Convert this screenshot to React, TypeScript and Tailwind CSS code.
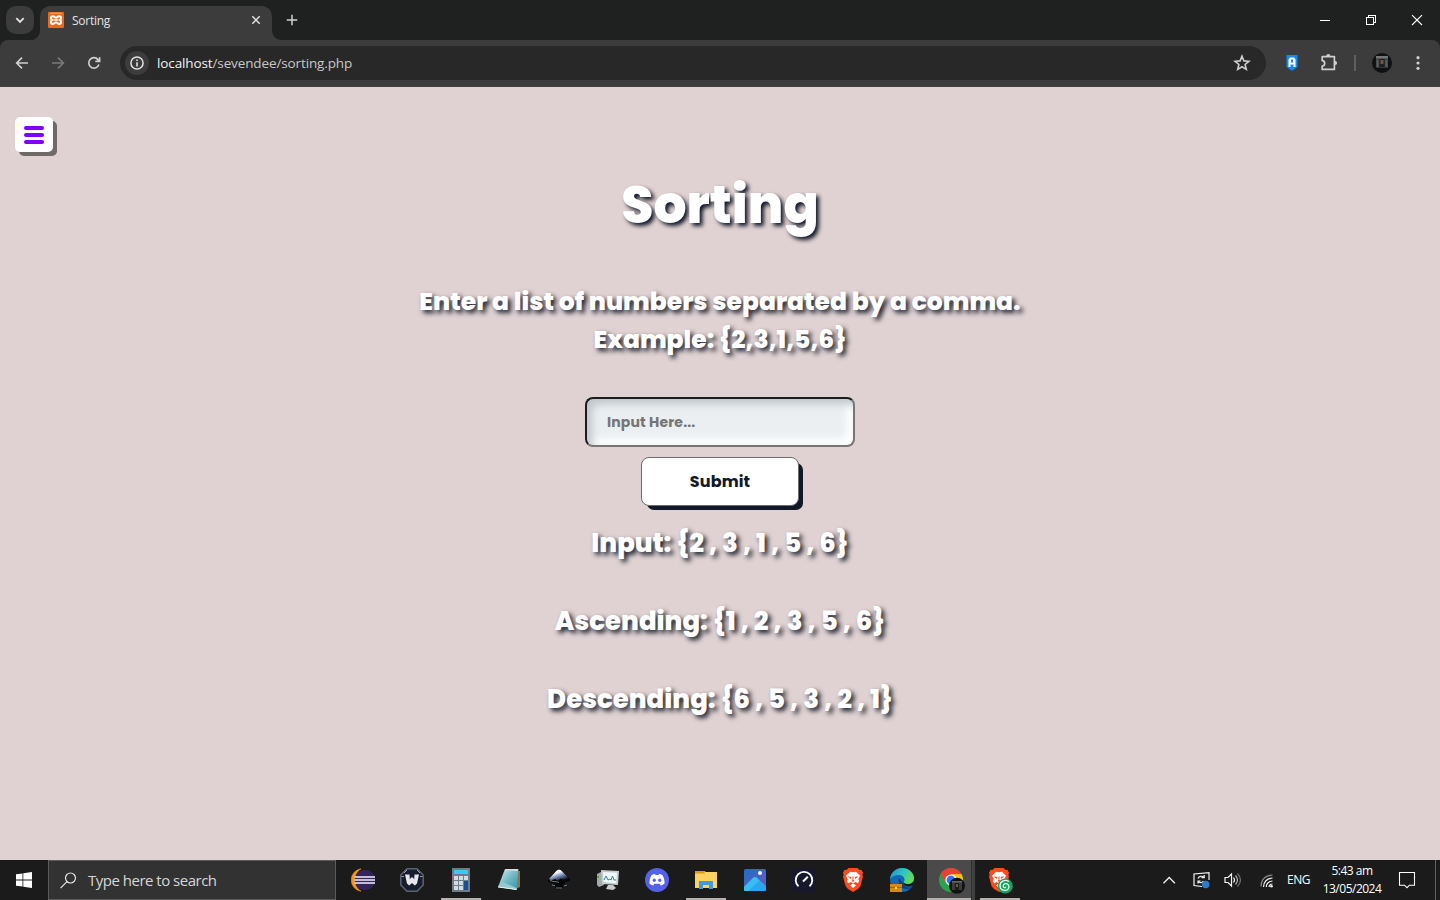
import type { ReactNode } from "react";

const SEGOE = "font-['Open_Sans','Noto_Sans',sans-serif]";

function TabStrip() {
  return (
    <div className="relative flex h-10 items-start bg-[#1f2120]">
      <div className="ml-1.5 mt-1.5 flex h-7 w-7 items-center justify-center rounded-[10px] bg-[#3c3c3c]">
        <svg width="28" height="28" viewBox="0 0 28 28" fill="none" stroke="#e3e3e3" strokeWidth="1.8">
          <path d="M10.3 12.2 14 15.9l3.7-3.7" />
        </svg>
      </div>
      <svg className="mt-[30px] shrink-0" width="6" height="10" viewBox="0 0 6 10">
        <path d="M6 0v10H-4C2 10 6 6 6 0Z" fill="#3c3c3c" />
      </svg>
      <div className="mt-1.5 flex h-[34px] w-[232px] items-start rounded-t-[10px] bg-[#3c3c3c] pl-2 pt-1.5">
        <svg width="16" height="16" viewBox="0 0 16 16">
          <rect width="16" height="16" rx="1" fill="#ea6a1a" />
          <path d="M2 1.2h12" stroke="#ffb27a" strokeWidth=".8" />
          <path
            d="M5 4.2C3.2 4.2 3 5 3 6c0 1.100.3 1.700 1 2-.7.3-1 .9-1 2 0 1 .5 1.900 2 1.900 1.600 0 1.500-1.500 3-1.500s1.400 1.500 3 1.500c1.500 0 2-.9 2-1.900 0-1.100-.3-1.700-1-2 .7-.3 1-.9 1-2 0-1-.2-1.800-2-1.800-1.600 0-1.500 1.500-3 1.500S6.600 4.200 5 4.200Z"
            fill="none"
            stroke="#fff"
            strokeWidth="2"
          />
          <path d="M6.200 8h3.600" stroke="#fff" strokeWidth="1.500" />
        </svg>
        <span className={`ml-2 text-[12px] leading-[17px] text-[#e3e3e3] tracking-[-0.25px] ${SEGOE}`}>Sorting</span>
        <svg className="ml-auto mr-2 mt-0" width="16" height="16" viewBox="0 0 16 16" stroke="#e3e3e3" strokeWidth="1.500">
          <path d="m4.300 4.300 7.400 7.400M11.700 4.300 4.300 11.700" />
        </svg>
      </div>
      <svg className="mt-[30px] shrink-0" width="10" height="10" viewBox="0 0 10 10">
        <path d="M0 0v10h10C4 10 0 6 0 0Z" fill="#3c3c3c" />
      </svg>
      <svg className="mt-3 ml-0.5" width="16" height="16" viewBox="0 0 16 16" stroke="#cfcfcf" strokeWidth="1.500">
        <path d="M8 2.700v10.600M2.700 8h10.600" />
      </svg>
      <div className="ml-auto flex h-10 items-center">
        <svg width="46" height="40" viewBox="0 0 46 40" stroke="#fff" shapeRendering="crispEdges">
          <path d="M18 20.500h10" />
        </svg>
        <svg width="46" height="40" viewBox="0 0 46 40" fill="none" stroke="#fff" shapeRendering="crispEdges">
          <path d="M18.500 17.500h7v7h-7ZM20.500 17v-1.500h7v7H26" />
        </svg>
        <svg width="46" height="40" viewBox="0 0 46 40" stroke="#fff" strokeWidth="1.100">
          <path d="m18 15.200 10 9.800M28 15.200 18 25" />
        </svg>
      </div>
    </div>
  );
}

function AddressBar() {
  return (
    <div className="bg-[#1f2120]">
      <div className="flex h-[47px] items-start rounded-t-[8px] border-b border-[#444241] bg-[#3c3c3c] pt-1.5">
        <div className="flex h-[34px] w-[120px] shrink-0 items-center">
          <svg className="ml-[14px]" width="16" height="16" viewBox="0 0 16 16" fill="none" stroke="#cfcfcf" strokeWidth="1.700">
            <path d="M14 8H3M8 2.700 2.700 8 8 13.300" />
          </svg>
          <svg className="ml-5" width="16" height="16" viewBox="0 0 16 16" fill="none" stroke="#797979" strokeWidth="1.700">
            <path d="M2 8h11M8 2.700 13.300 8 8 13.300" />
          </svg>
          <svg className="ml-5" width="16" height="16" viewBox="0 0 16 16" fill="none" stroke="#cfcfcf" strokeWidth="1.700">
            <path d="M12.900 9.500A5.200 5.200 0 1 1 12 4.600l1.500 1.800M13.600 2.200v4.200H9.300" />
          </svg>
        </div>
        <div className="flex h-[34px] w-[1146px] shrink-0 items-center rounded-full bg-[#282828] pl-[5px]">
          <div className="flex h-6 w-6 items-center justify-center rounded-full bg-[#3c3c3c]">
            <svg width="14" height="14" viewBox="0 0 14 14" fill="none" stroke="#e3e3e3" strokeWidth="1.500">
              <circle cx="7" cy="7" r="6.100" />
              <path d="M7 6.200v4.200M7 3.500v1.500" strokeWidth="1.600" />
            </svg>
          </div>
          <span className={`ml-2 text-[13.500px] leading-5 tracking-[-0.12px] text-[#c7c7c7] ${SEGOE}`}>
            <span className="text-[#f1f1f1]">localhost</span>/sevendee/sorting.php
          </span>
          <svg className="ml-auto mr-[15px]" width="18" height="18" viewBox="0 0 18 18" fill="none" stroke="#cfcfcf" strokeWidth="1.600">
            <path d="m9 2.200 1.900 4.700 5 .4-3.800 3.200 1.200 4.900L9 12.800l-4.300 2.600 1.200-4.900-3.800-3.200 5-.4Z" />
          </svg>
        </div>
        <div className="flex h-[34px] grow items-center">
          <svg className="ml-5" width="12" height="16" viewBox="0 0 12 16">
            <path d="M.5 0h11v12L6 15.700.5 12Z" fill="#1489f0" />
            <path d="M2.500 12V4.500L4 2.500h4l1.500 2V12h-2V9.500h-3V12ZM5 4.500v3h2v-3Z" fill="#fff" fillRule="evenodd" />
          </svg>
          <svg className="ml-[22px]" width="18" height="18" viewBox="0 0 18 18">
            <path
              d="M2.200 2.600h12.200v12.800H2.200V12c1.800-.2 2.500-1.100 2.500-2.600S4 6.800 2.200 6.600Z"
              fill="none"
              stroke="#cfcfcf"
              strokeWidth="1.700"
              strokeLinejoin="round"
            />
            <path d="M6.200 2.200a2.100 2.100 0 0 1 4.200 0ZM15 6.900a2.100 2.100 0 0 1 0 4.200Z" fill="#cfcfcf" />
          </svg>
          <div className="ml-4 h-4 w-[2px] bg-[#5f5f5f]" />
          <svg className="ml-4" width="20" height="20" viewBox="0 0 20 20">
            <circle cx="10" cy="10" r="10" fill="#101112" />
            <path d="M4 4h12v11H4Z" fill="#353737" />
            <path d="M4 3h12v2.500H4Z" fill="#777" />
            <path d="M7.500 6h5v8h-5Z" fill="#241f1e" />
            <path d="M8.500 7h3v4h-3Z" fill="#69564c" />
            <path d="M4.500 6.500h2V14h-2ZM13.500 6.500h2V14h-2Z" fill="#5e6364" />
          </svg>
          <svg className="ml-[17px]" width="18" height="18" viewBox="0 0 18 18" fill="#cfcfcf">
            <circle cx="9" cy="3.700" r="1.600" />
            <circle cx="9" cy="9" r="1.600" />
            <circle cx="9" cy="14.300" r="1.600" />
          </svg>
        </div>
      </div>
    </div>
  );
}

function Page() {
  const line = "whitespace-nowrap text-center text-white [text-shadow:3px_3px_5px_#111827] font-extrabold";
  const hint = `${line} text-[25px] leading-[38px]`;
  const result = `${line} text-[26px] leading-[39px]`;
  return (
    <main className="h-[773px] bg-[#e0d2d2] font-['Poppins','Inter',sans-serif]">
      <div className="flex h-[90px] items-start pl-[15px] pt-[30px]">
        <button className="flex h-[35px] w-[38px] flex-col items-center justify-center gap-[3px] rounded-[5px] bg-white shadow-[4px_4px_0_#706969]">
          <span className="h-1 w-5 rounded-[2px] bg-[#7f00ff]" />
          <span className="h-1 w-5 rounded-[2px] bg-[#7f00ff]" />
          <span className="h-1 w-5 rounded-[2px] bg-[#7f00ff]" />
        </button>
      </div>
      <div className="flex flex-col items-center">
        <h1 className="h-[106px] text-[52px] leading-[55px] font-extrabold text-white [text-shadow:3px_3px_4px_#111827]">
          Sorting
        </h1>
        <p className={hint}>Enter a list of numbers separated by a comma.</p>
        <p className={hint}>Example: {"{2,3,1,5,6}"}</p>
        <input
          className="mt-[38px] h-[50px] w-[270px] rounded-[8px] border-2 border-[#767676] border-t-[#1c1c1c] border-l-[#1c1c1c] bg-[#ebeff2] px-5 text-[14px] font-bold tracking-[0.15px] shadow-[inset_5px_5px_8px_#bec5c9,inset_-6px_-6px_8px_#ffffff] placeholder:text-[#757575] placeholder:opacity-100"
          placeholder="Input Here..."
        />
        <button className="mt-2.5 h-[49px] w-[158px] rounded-[8px] border border-[#6b6b6b] bg-white text-[16px] font-bold tracking-[0.15px] text-[#111827] shadow-[5px_5px_0_-1px_#111827]">
          Submit
        </button>
        <p className={`${result} mt-[18px]`}>Input: {"{2 , 3 , 1 , 5 , 6}"}</p>
        <p className={`${result} mt-[39px]`}>Ascending: {"{1 , 2 , 3 , 5 , 6}"}</p>
        <p className={`${result} mt-[39px]`}>Descending: {"{6 , 5 , 3 , 2 , 1}"}</p>
      </div>
    </main>
  );
}

function Slot({ children, open = false, label }: { children: ReactNode; open?: boolean; label: string }) {
  return (
    <div aria-label={label} className="flex h-10 w-[49px] shrink-0 flex-col items-center">
      <svg className="mt-2 h-6 w-6" viewBox="0 0 24 24">
        {children}
      </svg>
      <div className={open ? "mt-1.5 h-0.5 w-10 bg-[#b5b1b0]" : "mt-1.5 h-0.5 w-10"} />
    </div>
  );
}

function Lion() {
  return (
    <>
      <path d="M7.500 0h9l2 2 1.800-.2 1.700 3-.6 2 .5 2-2.500 9.500L17 21l-5 3-5-3-2.400-2.700L2 8.800l.6-2L2 4.800l1.700-3 1.800.2Z" fill="#fb4b20" />
      <path d="M12 4.200 15 3.700l4 4.100-1.700 3.500 1 1.700-1.500 2.300-2.600-1.300L12 15.300l3 2.100-3 2.600-3-2.600 3-2.100-2.200-1.300-2.600 1.300L5.700 13l1-1.700L5 7.800l4-4.100Z" fill="#fff" />
      <path d="m6.500 8.300 3.800.8-.6 2ZM17.500 8.300l-3.800.8.6 2ZM11.400 8.500h1.200l-.2 3 1 1.400-1.400.9-1.400-.9 1-1.400Z" fill="#fb4b20" />
    </>
  );
}

function AppIcons() {
  return (
    <div className="ml-0.5 flex">
      <Slot label="Eclipse">
        <path d="M10 .8A11.300 11.300 0 0 0 10 23.200C1.500 18 1.500 6 10 .8Z" fill="#f7941e" stroke="#f7941e" strokeWidth=".6" />
        <circle cx="14" cy="12" r="10.200" fill="#35235d" />
        <path d="M3.500 9h20.500M3.300 12h21M3.500 15h20.500" stroke="#f4effa" strokeWidth="1.300" />
      </Slot>
      <Slot label="Launcher">
        <path d="M7 .8h10L23.200 7v10L17 23.200H7L.8 17V7Z" fill="#171d2c" stroke="#5e646f" strokeWidth="1.500" />
        <path d="m4 5 3-3M20 5l-3-3M1.500 8.500h2.500M20 8.500h2.500" stroke="#969ca7" strokeWidth="1" />
        <path d="M5 6.500h4.500l.3 5 1.200-2h2l1.200 2 .3-5H19l-2 9-2.200 2-2.800-2.500L9.200 17.500 7 15.500Z" fill="#e6e8ed" />
      </Slot>
      <Slot label="Calculator" open>
        <path d="M3 0h18v24H3Z" fill="#6f7c86" />
        <path d="M5 2h14v4H5Z" fill="#3cc7f5" />
        <path d="M5 8h4v4H5Zm5 0h4v4h-4Zm5 0h4v4h-4ZM5 13h4v4H5Zm5 0h4v4h-4ZM5 18h4v4H5Zm5 0h4v4h-4Z" fill="#d3dae0" />
        <path d="M15 13h4v9h-4Z" fill="#164f98" />
      </Slot>
      <Slot label="Notepad">
        <defs>
          <linearGradient id="note" x1="0" y1="0" x2="1" y2="1">
            <stop stopColor="#d8f1f3" />
            <stop offset=".55" stopColor="#6cb5c2" />
            <stop offset="1" stopColor="#2795aa" />
          </linearGradient>
        </defs>
        <path d="m10 2 12 1v16l-4 2Z" fill="#8d7748" />
        <path d="M7 1h13.500L18.500 22 0 19Z" fill="url(#note)" />
        <path d="m0 19 4.500-5L18.800 20l-.3 2Z" fill="#8fcbd4" />
        <path d="m0 18.500 18.500 2.500v1L0 19.500Z" fill="#e5f2f3" />
        <path d="M8 1h12l-.3 2L7.300 2.500Z" fill="#d9dedc" />
      </Slot>
      <Slot label="Inkscape">
        <defs>
          <linearGradient id="ink" x1="0.200" y1="0" x2=".8" y2="1">
            <stop offset=".3" stopColor="#f5f7fa" />
            <stop offset=".6" stopColor="#6b83ab" />
            <stop offset=".95" stopColor="#07090b" />
          </linearGradient>
        </defs>
        <path d="M12 1c1 0 2 .8 3 1.700l7.500 8c1.500 1.800-.5 3-5 3.300l1 2-3.500 1 1.500 2-4.500 2.500-4-1.500.5-2-3-1 1.500-2c-5-.3-7-1.500-5.500-3.300L9 2.700C10 1.800 11 1 12 1Z" fill="#050607" />
        <path d="M12 1.500c1 0 2 .8 3 1.700l7 7.300-4 2-4-2-3 2-3-1.500-3.500 1.500-2.500-1.500L9 3.200c1-.9 2-1.700 3-1.700Z" fill="url(#ink)" />
        <path d="M3 12.500c4 2 7 .5 9 2M5 17l3 .6M9 20h6M17 18l3-1" stroke="#8f969e" strokeWidth=".8" fill="none" />
      </Slot>
      <Slot label="Process monitor">
        <path d="m1 6 6-3 1 14-5 2-2-2Z" fill="#a4aaab" />
        <path d="m5 2 18 1-1 14-16-1Z" fill="#c5caca" />
        <path d="m7 4 14 .7-.8 10.500L7.500 14Z" fill="#f0fafc" />
        <path d="m8 12 2-4 2 4 2-1 1 1 1.500-4 1.500 4h2" stroke="#3382b3" strokeWidth="1" fill="none" />
        <path d="M12 17h5l3 3-3 2-7-1Z" fill="#c7cccb" />
        <path d="M1 8h2v2H1Z" fill="#49af36" />
      </Slot>
      <Slot label="Discord">
        <circle cx="12" cy="12" r="12" fill="#5661ea" />
        <path d="M6.500 7.200c1.300-.7 2.500-1 3.500-1.100l.6 1h2.800l.6-1c1 .1 2.200.4 3.500 1.100 1.500 2.600 2.200 5.400 2 8.300-1.200 1.100-2.500 1.600-3.700 1.900l-1-1.600H9.200l-1 1.600c-1.200-.3-2.500-.8-3.700-1.900-.2-2.900.5-5.700 2-8.300Z" fill="#fff" />
        <ellipse cx="9.300" cy="12.300" rx="1.600" ry="1.800" fill="#5661ea" />
        <ellipse cx="14.700" cy="12.300" rx="1.600" ry="1.800" fill="#5661ea" />
      </Slot>
      <Slot label="Explorer" open>
        <path d="M1 3h9l2 1h11v16H1Z" fill="#ffd262" />
        <path d="M1 3h8.500l1.500 2.500H1Z" fill="#e29c05" />
        <path d="M5 13h14v8h-4v-4H9v4H5Z" fill="#409ade" />
      </Slot>
      <Slot label="Photos">
        <defs>
          <linearGradient id="sky" x1="0" y1="0" x2="1" y2="1">
            <stop stopColor="#1d6fc3" />
            <stop offset="1" stopColor="#7157be" />
          </linearGradient>
        </defs>
        <rect x="1" y="1" width="22" height="22" rx="1.500" fill="url(#sky)" />
        <path d="M1 19 10.500 9.600q1.500-1.300 3 0L23 18v3.500q0 1.500-1.500 1.500H2.500Q1 23 1 21.500Z" fill="#2ba6ee" />
        <path d="M1 19 10.500 9.600q1.500-1.300 3 0l3 2.800L5.500 23h-3Q1 23 1 21.500Z" fill="#38bdf2" />
        <circle cx="17" cy="5" r="2" fill="#f4f3ff" />
      </Slot>
      <Slot label="Speedtest">
        <path d="M0 0h24v24H0Z" fill="#17182d" />
        <path d="M6.500 18.400A8.300 8.300 0 1 1 17.500 18.400" fill="none" stroke="#fff" strokeWidth="1.800" />
        <path d="m11 13.500 4.800-4.800" stroke="#fff" strokeWidth="2" />
      </Slot>
      <Slot label="Brave">
        <Lion />
      </Slot>
      <Slot label="Edge">
        <defs>
          <linearGradient id="edge" x1="0" y1="0" x2="1" y2=".4">
            <stop stopColor="#218ed1" />
            <stop offset=".55" stopColor="#2cc3c7" />
            <stop offset="1" stopColor="#65d957" />
          </linearGradient>
        </defs>
        <circle cx="12" cy="12" r="12" fill="#1268b3" />
        <path d="M0 11C1 4 6 0 12 0c7 0 12 5 12 10 0 4-3 6-6.500 6-3 0-4.500-1.200-3.500-2.500 2-3-1-6.500-5-6.500-4 0-7 1.500-9 4Z" fill="url(#edge)" />
        <path d="M9 10c-2 6 2 11 8 11 2 0 4-.8 5-2-4 1.500-9-.5-9-4Z" fill="#0b3f7e" />
        <path d="M13.500 14c-.5 3 2 4.500 5 4.500 1.500 0 3-.5 5-1.500l.5-4c-2 3-5 3.300-7 3-2 0-3-1-3.500-2Z" fill="#1b1b1b" />
        <path d="M0 16h12v8H0Z" fill="#d28a1c" />
        <path d="M0 19.500h12" stroke="#a4650b" fill="none" />
        <path d="M5 19h2v2H5Z" fill="#ffd45b" />
      </Slot>
      <div aria-label="Chrome" className="ml-px flex h-10 w-12 justify-between bg-[#303030]">
        <div className="flex h-10 w-11 flex-col bg-[#4b4a4a]">
          <svg className="ml-3 mt-2" width="27" height="26" viewBox="0 0 27 26">
            <circle cx="12" cy="12" r="12" fill="#2ba24c" />
            <path d="M1.600 6A12 12 0 0 1 22.400 6H12L6.800 15Z" fill="#e94235" />
            <path d="M22.400 6A12 12 0 0 1 12 24l5.200-9L12 6Z" fill="#fbc116" />
            <circle cx="12" cy="12" r="5.600" fill="#fff" />
            <circle cx="12" cy="12" r="4.400" fill="#3278e4" />
            <circle cx="18" cy="17.800" r="8" fill="#111212" />
            <path d="M13 13h10v9H13Z" fill="#3a3b3b" />
            <path d="M13 13h10v1.500H13Z" fill="#666" />
            <path d="M16 15h4v7h-4Z" fill="#211a18" />
            <path d="M17 16h2v3h-2Z" fill="#69564c" />
          </svg>
          <div className="mt-1 h-0.5 w-full bg-[#b5b1b0]" />
        </div>
        <div className="h-10 w-[3px] bg-[#414040]" />
      </div>
      <div aria-label="Brave profile" className="ml-[5px] flex h-10 w-10 flex-col items-center">
        <svg className="mt-2" width="26" height="26" viewBox="0 0 26 26">
          <Lion />
          <circle cx="18.200" cy="18" r="7.600" fill="#17a45c" />
          <path d="M22 13.500c-4.500-2.500-9 0-9 4 0 6 8.700 6.500 9 1.500.1-3-3.500-4.400-5.500-2.200-1.300 2 1.200 3.700 2.600 2.200" stroke="#e4fff0" strokeWidth="1.300" fill="none" />
        </svg>
        <div className="mt-1 h-0.5 w-10 bg-[#b5b1b0]" />
      </div>
    </div>
  );
}

function Taskbar() {
  return (
    <footer className={`flex h-10 bg-[#1b1b1b] ${SEGOE}`}>
      <div className="flex w-12 items-center justify-center">
        <svg width="16" height="16" viewBox="0 0 16 16" fill="#fff">
          <path d="M0 2.300 6.500 1.400v6.200H0ZM7.300 1.300 16 0v7.600H7.300ZM0 8.400h6.500v6.200L0 13.700ZM7.300 8.400H16V16l-8.700-1.300Z" />
        </svg>
      </div>
      <div className="flex w-72 items-center border border-[#5b5b5b] bg-[#333232] pl-[11px]">
        <svg width="17" height="17" viewBox="0 0 17 17" fill="none" stroke="#e5e5e5" strokeWidth="1.200">
          <circle cx="10.500" cy="6" r="5" />
          <path d="M7 9.700.5 16.200" />
        </svg>
        <span className="ml-[11px] text-[15px] leading-5 tracking-[-0.5px] text-[#d6d6d6]">Type here to search</span>
      </div>
      <AppIcons />
      <div className="ml-auto flex">
        <svg className="mt-3" width="16" height="16" viewBox="0 0 16 16" fill="none" stroke="#f2f2f2" strokeWidth="1.300">
          <path d="m2.500 11.200 5.700-5.700 5.700 5.700" />
        </svg>
        <svg className="ml-4 mt-3" width="17" height="17" viewBox="0 0 17 17" fill="none" stroke="#f4f4f4" strokeWidth="1.200">
          <path d="M9 14.500 1 13.500V2L16 .7V8M5 6.500C6 4 9 3.500 11 5.500M11.200 3v2.700H8.500M5 11.500V9h2.500M5.200 9.200c1 2 4 2 5.300-.2" />
          <circle cx="12.700" cy="12.500" r="3.800" fill="#2d7bc9" stroke="none" />
        </svg>
        <svg className="ml-[14px] mt-3" width="18" height="16" viewBox="0 0 18 16" fill="none" stroke="#f4f4f4" strokeWidth="1.200">
          <path d="M1 5.500h3l3.500-3.500v12L4 10.500H1Z" />
          <path d="M9.500 5.500q2 2.500 0 5" />
          <path d="M11.500 3.500q4 4.500 0 9" stroke="#b3b3b3" />
          <path d="M13.500 1.500q6 6.500 0 13" stroke="#707070" />
        </svg>
        <svg className="ml-[18px] mt-[14px]" width="14" height="14" viewBox="0 0 14 14" fill="none" strokeWidth="1.200">
          <path d="M1 12.500Q1.300 1.500 12.500 1" stroke="#858585" />
          <path d="M3.500 13Q4 4.500 12.500 4" stroke="#eee" />
          <path d="M6.200 13Q6.500 7.500 12.500 7" stroke="#eee" />
          <path d="M9 13q.3-3 3.500-3" stroke="#eee" />
          <circle cx="11.500" cy="12.200" r="1.300" fill="#eee" />
        </svg>
        <span className="ml-[13px] w-[24px] whitespace-nowrap text-[12px] leading-10 tracking-[-0.5px] text-white">ENG</span>
        <div className="ml-[9px] mt-0.5 w-[64px] whitespace-nowrap text-center text-[12px] leading-[18px] tracking-[-0.5px] text-white">
          <div>5:43 am</div>
          <div>13/05/2024</div>
        </div>
        <svg className="ml-[14px] mt-3" width="18" height="18" viewBox="0 0 18 18" fill="none" stroke="#fff" strokeWidth="1.100">
          <path d="M1.500.5h15v12.700h-5L9 15.700l-2.500-2.500h-5Z" />
        </svg>
        <div className="ml-[19px] mr-1 h-10 w-px bg-[#626262]" />
      </div>
    </footer>
  );
}

export default function App() {
  return (
    <div className="h-[900px] w-[1440px] overflow-hidden">
      <TabStrip />
      <AddressBar />
      <Page />
      <Taskbar />
    </div>
  );
}
